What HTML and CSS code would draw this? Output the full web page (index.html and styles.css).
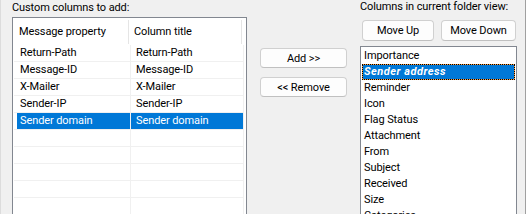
FILE: index.html
```html
<!DOCTYPE html>
<html lang="en">
<head>
    <meta charset="UTF-8">
    <title>Custom columns</title>
    <link rel="stylesheet" href="styles.css">
</head>
<body>
    <div class="dialog">
        <div class="painel-esq">
            <div class="rotulo">Custom columns to add:</div>
            <div class="lista-grade">
                <div class="cabecalho">
                    <div class="col1">Message property</div>
                    <div class="col2">Column title</div>
                </div>
                <div class="linha"><div class="c1">Return-Path</div><div class="c2">Return-Path</div></div>
                <div class="linha"><div class="c1">Message-ID</div><div class="c2">Message-ID</div></div>
                <div class="linha"><div class="c1">X-Mailer</div><div class="c2">X-Mailer</div></div>
                <div class="linha"><div class="c1">Sender-IP</div><div class="c2">Sender-IP</div></div>
                <div class="linha sel"><div class="c1">Sender domain</div><div class="c2">Sender domain</div></div>
                <div class="linha"><div class="c1"></div><div class="c2"></div></div>
                <div class="linha"><div class="c1"></div><div class="c2"></div></div>
                <div class="linha"><div class="c1"></div><div class="c2"></div></div>
                <div class="linha"><div class="c1"></div><div class="c2"></div></div>
                <div class="linha"><div class="c1"></div><div class="c2"></div></div>
            </div>
        </div>

        <div class="botoes-meio">
            <button class="btn largo">Add &gt;&gt;</button>
            <button class="btn largo">&lt;&lt; Remove</button>
        </div>

        <div class="painel-dir">
            <div class="rotulo">Columns in current folder view:</div>
            <div class="barra">
                <button class="btn subir">Move Up</button>
                <button class="btn descer">Move Down</button>
            </div>
            <div class="lista">
                <div class="item">Importance</div>
                <div class="item ativo">Sender address</div>
                <div class="item">Reminder</div>
                <div class="item">Icon</div>
                <div class="item">Flag Status</div>
                <div class="item">Attachment</div>
                <div class="item">From</div>
                <div class="item">Subject</div>
                <div class="item">Received</div>
                <div class="item">Size</div>
                <div class="item">Categories</div>
            </div>
        </div>
    </div>
</body>
</html>
```

FILE: styles.css
```css
html, body {
    margin: 0;
    padding: 0;
}
body {
    font-family: "Segoe UI", Roboto, sans-serif;
    font-size: 11px;
    letter-spacing: -0.1px;
    color: #000;
    background-color: #f0f0f0;
    width: 526px;
    height: 214px;
    overflow: hidden;
}
.dialog {
    display: flex;
    height: 214px;
    border-left: 1px solid #dcdcdc;
    border-right: 1px solid #a0a0a0;
    box-sizing: border-box;
    overflow: hidden;
}
.rotulo {
    height: 17px;
    line-height: 15px;
    white-space: nowrap;
}

/* lado esquerdo */
.painel-esq {
    margin-left: 11px;
    width: 235px;
}
.lista-grade {
    background-color: #fff;
    border: 1px solid #828790;
    border-bottom: none;
    height: 200px;
    overflow: hidden;
}
.cabecalho {
    display: flex;
    height: 27px;
    line-height: 27px;
}
.cabecalho .col1 {
    width: 116px;
    padding-left: 6px;
    box-sizing: border-box;
    position: relative;
}
.cabecalho .col2 {
    width: 113px;
    padding-left: 5px;
    box-sizing: border-box;
    position: relative;
}
.cabecalho .col1::after, .cabecalho .col2::after {
    content: "";
    position: absolute;
    right: 0;
    top: 2px;
    bottom: 1px;
    width: 1px;
    background-color: #e5e5e5;
}
.linha {
    display: flex;
    margin-left: 1px;
    padding-left: 3px;
    width: 230px;
    box-sizing: border-box;
    height: 17px;
    line-height: 16px;
    border-bottom: 1px solid #f0f0f0;
}
.linha .c1 {
    width: 114px;
    padding-left: 3px;
    box-sizing: border-box;
    border-right: 1px solid #f0f0f0;
}
.linha .c2 {
    width: 113px;
    padding-left: 5px;
    box-sizing: border-box;
    border-right: 1px solid #f0f0f0;
}
.linha.sel .c1, .linha.sel .c2 {
    background-color: #0078d7;
    color: #fff;
}

/* botoes do meio */
.botoes-meio {
    display: flex;
    flex-direction: column;
    gap: 9px;
    margin-left: 13px;
    padding-top: 48px;
}
.btn {
    font-family: inherit;
    font-size: 11px;
    letter-spacing: -0.1px;
    color: #000;
    background-color: #fdfdfd;
    border: 1px solid #d0d0d0;
    border-bottom-color: #c0c0c0;
    border-radius: 4px;
    height: 20px;
    padding: 0;
    line-height: 17px;
}
.btn.largo {
    width: 87px;
}

/* lado direito */
.painel-dir {
    margin-left: 13px;
    width: 157px;
}
.painel-dir .rotulo {
    margin-top: -1px;
    height: 21px;
}
.barra {
    display: flex;
    gap: 7px;
    margin-left: 2px;
}
.btn.subir {
    width: 72px;
    height: 21px;
}
.btn.descer {
    width: 75px;
    height: 21px;
}
.lista {
    margin-top: 5px;
    background-color: #fff;
    border: 1px solid #828790;
    border-bottom: none;
    height: 200px;
    padding: 1px 1px 0 1px;
    overflow: hidden;
}
.item {
    height: 16px;
    line-height: 16px;
    padding-left: 2px;
    white-space: nowrap;
}
.item.ativo {
    background-color: #0078d7;
    color: #fff;
    font-weight: bold;
    font-style: italic;
    letter-spacing: 0.5px;
    outline: 1px dotted #000;
    outline-offset: -1px;
    box-shadow: inset 0 0 0 1px #ff9b3a;
}
```
